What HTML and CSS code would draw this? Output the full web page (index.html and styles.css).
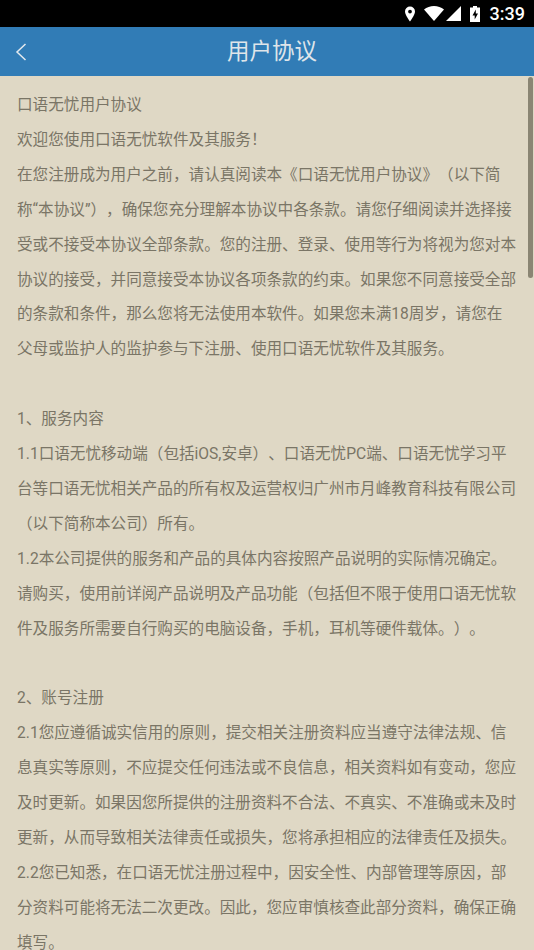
FILE: index.html
```html
<!DOCTYPE html>
<html lang="zh-CN">
<head>
<meta charset="utf-8">
<title>用户协议</title>
<link rel="stylesheet" href="styles.css">
</head>
<body>
<div class="screen">
  <div class="statusbar">
    <svg class="ic-pin" viewBox="0 0 12 16" width="12" height="16"><path fill="#fff" fill-rule="evenodd" d="M6 .5a5 5 0 0 0-5 5c0 3.600 5 10 5 10s5-6.400 5-10a5 5 0 0 0-5-5zm0 3.200a1.900 1.900 0 1 1 0 3.800 1.900 1.900 0 0 1 0-3.800z"/></svg>
    <svg class="ic-wifi" viewBox="0 0 20 15" width="20" height="15"><path fill="#fff" d="M0 3.500C2.800 1.300 6.200 0 10 0s7.200 1.300 10 3.500L10 15z"/></svg>
    <svg class="ic-signal" viewBox="0 0 15 15" width="15" height="15"><path fill="#fff" d="M15 0v15H0z"/></svg>
    <svg class="ic-batt" viewBox="0 0 10 16" width="10" height="16"><path fill="#fff" fill-rule="evenodd" d="M3 0h4v1.500h3V16H0V1.500h3zM5.800 3.500 2.500 9.500h2.200V13.500L8 7.500H5.800z"/></svg>
    <span class="clock">3:39</span>
  </div>
  <header class="appbar">
    <svg class="back" viewBox="0 0 12 18" width="12" height="18"><path fill="none" stroke="#e3e9ee" stroke-width="1.500" d="M10.500 1 2 9l8.500 8"/></svg>
    <h1 class="title">用户协议</h1>
  </header>
  <main class="content">
    <div class="scrollthumb"></div>
    <p>口语无忧用户协议</p>
    <p>欢迎您使用口语无忧软件及其服务！</p>
    <p>在您注册成为用户之前，请认真阅读本《口语无忧用户协议》（以下简<br>称“本协议”），确保您充分理解本协议中各条款。请您仔细阅读并选择接<br>受或不接受本协议全部条款。您的注册、登录、使用等行为将视为您对本<br>协议的接受，并同意接受本协议各项条款的约束。如果您不同意接受全部<br>的条款和条件，那么您将无法使用本软件。如果您未满18周岁，请您在<br>父母或监护人的监护参与下注册、使用口语无忧软件及其服务。</p>
    <p class="blank">&nbsp;</p>
    <p>1、服务内容</p>
    <p>1.1口语无忧移动端（包括iOS,安卓）、口语无忧PC端、口语无忧学习平<br>台等口语无忧相关产品的所有权及运营权归广州市月峰教育科技有限公司<br>（以下简称本公司）所有。</p>
    <p>1.2本公司提供的服务和产品的具体内容按照产品说明的实际情况确定。<br>请购买，使用前详阅产品说明及产品功能（包括但不限于使用口语无忧软<br>件及服务所需要自行购买的电脑设备，手机，耳机等硬件载体。）。</p>
    <p class="blank">&nbsp;</p>
    <p>2、账号注册</p>
    <p>2.1您应遵循诚实信用的原则，提交相关注册资料应当遵守法律法规、信<br>息真实等原则，不应提交任何违法或不良信息，相关资料如有变动，您应<br>及时更新。如果因您所提供的注册资料不合法、不真实、不准确或未及时<br>更新，从而导致相关法律责任或损失，您将承担相应的法律责任及损失。</p>
    <p>2.2您已知悉，在口语无忧注册过程中，因安全性、内部管理等原因，部<br>分资料可能将无法二次更改。因此，您应审慎核查此部分资料，确保正确<br>填写。</p>
  </main>
</div>
</body>
</html>
```
FILE: styles.css
```css
html, body { margin: 0; padding: 0; }
body { width: 534px; height: 950px; overflow: hidden; font-family: Roboto, "Noto Sans CJK SC", sans-serif; }
.screen { width: 534px; height: 950px; display: flex; flex-direction: column; overflow: hidden; background: #dfd8c5; }
.statusbar { height: 27px; flex: none; background: #000; display: flex; align-items: center; justify-content: flex-end; padding-right: 9px; box-sizing: border-box; }
.ic-pin { margin-right: 8px; }
.ic-wifi { margin-right: 2px; }
.ic-signal { margin-right: 9px; }
.ic-batt { margin-right: 10px; }
.clock { color: #fff; font: 500 18px Roboto, sans-serif; }
.appbar { height: 49px; flex: none; background: #317cb6; position: relative; display: flex; align-items: center; justify-content: center; padding: 0 0 2px 10px; box-sizing: border-box; }
.back { position: absolute; left: 15px; top: 16px; }
.title { margin: 0; color: #dfe5ea; font-weight: 400; font-size: 22.500px; line-height: 30px; }
.content { flex: 1; position: relative; padding: 12px 0 0 17px; overflow: hidden; color: #7a7566; font-size: 15.600px; line-height: 34.900px; white-space: nowrap; text-spacing-trim: space-all; }
.content p { margin: 0; }
.scrollthumb { position: absolute; right: 1px; top: 1px; width: 5px; height: 201px; border-radius: 2.500px; background: #8a8573; }
```
